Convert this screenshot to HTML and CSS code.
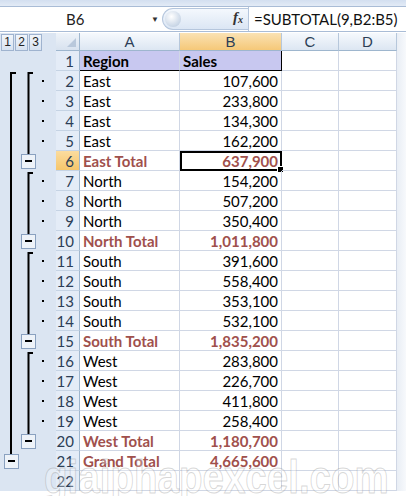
FILE: index.html
```html
<!DOCTYPE html>
<html lang="en">
<head>
    <meta charset="UTF-8">
    <title>Subtotal outline</title>
    <link rel="stylesheet" href="styles.css">
</head>
<body>
    <div class="topstrip"></div>

    <!-- Name box + formula bar -->
    <div class="formula-bar">
        <div class="namebox">
            <span class="cell-ref">B6</span>
            <span class="drop">&#9660;</span>
        </div>
        <div class="pill">
            <span class="knob"></span>
            <span class="fx">f<sub>x</sub></span>
        </div>
        <div class="formula">=SUBTOTAL(9,B2:B5)</div>
    </div>

    <div class="sheet">
        <!-- Outline gutter -->
        <div class="outline">
            <div class="levels">
                <span class="lvl">1</span>
                <span class="lvl">2</span>
                <span class="lvl">3</span>
            </div>
            <svg class="outline-body" width="56" height="440" viewBox="0 0 56 440">
                <g fill="none" stroke="#000" stroke-width="2">
                    <path d="M16 22 H11 V403"/>
                    <path d="M33 22 H28.5 V103"/>
                    <path d="M33 122 H28.5 V183"/>
                    <path d="M33 202 H28.5 V283"/>
                    <path d="M33 302 H28.5 V383"/>
                </g>
                <g fill="#000">
                    <rect x="42" y="29" width="2" height="2"/>
                    <rect x="42" y="49" width="2" height="2"/>
                    <rect x="42" y="69" width="2" height="2"/>
                    <rect x="42" y="89" width="2" height="2"/>
                    <rect x="42" y="129" width="2" height="2"/>
                    <rect x="42" y="149" width="2" height="2"/>
                    <rect x="42" y="169" width="2" height="2"/>
                    <rect x="42" y="209" width="2" height="2"/>
                    <rect x="42" y="229" width="2" height="2"/>
                    <rect x="42" y="249" width="2" height="2"/>
                    <rect x="42" y="269" width="2" height="2"/>
                    <rect x="42" y="309" width="2" height="2"/>
                    <rect x="42" y="329" width="2" height="2"/>
                    <rect x="42" y="349" width="2" height="2"/>
                    <rect x="42" y="369" width="2" height="2"/>
                </g>
                <g class="minus">
                    <rect x="21.5" y="103.5" width="14" height="14"/>
                    <rect x="21.5" y="183.5" width="14" height="14"/>
                    <rect x="21.5" y="283.5" width="14" height="14"/>
                    <rect x="21.5" y="383.5" width="14" height="14"/>
                    <rect x="4.5" y="403.5" width="14" height="14"/>
                </g>
                <g fill="#000">
                    <rect x="25" y="109" width="7" height="2"/>
                    <rect x="25" y="189" width="7" height="2"/>
                    <rect x="25" y="289" width="7" height="2"/>
                    <rect x="25" y="389" width="7" height="2"/>
                    <rect x="8" y="409" width="7" height="2"/>
                </g>
            </svg>
        </div>

        <div class="grid">
            <div class="row head">
                <div class="rh corner"><span class="tri"></span></div>
                <div class="ch col-a">A</div>
                <div class="ch col-b active">B</div>
                <div class="ch col-c">C</div>
                <div class="ch col-d">D</div>
            </div>
            <div class="row">
                <div class="rh">1</div>
                <div class="c col-a title">Region</div>
                <div class="c col-b title last">Sales</div>
                <div class="c col-c"></div>
                <div class="c col-d"></div>
            </div>
            <div class="row"><div class="rh">2</div><div class="c col-a">East</div><div class="c col-b num">107,600</div><div class="c col-c"></div><div class="c col-d"></div></div>
            <div class="row"><div class="rh">3</div><div class="c col-a">East</div><div class="c col-b num">233,800</div><div class="c col-c"></div><div class="c col-d"></div></div>
            <div class="row"><div class="rh">4</div><div class="c col-a">East</div><div class="c col-b num">134,300</div><div class="c col-c"></div><div class="c col-d"></div></div>
            <div class="row"><div class="rh">5</div><div class="c col-a">East</div><div class="c col-b num">162,200</div><div class="c col-c"></div><div class="c col-d"></div></div>
            <div class="row total"><div class="rh active">6</div><div class="c col-a">East Total</div><div class="c col-b num selected">637,900<span class="handle"></span></div><div class="c col-c"></div><div class="c col-d"></div></div>
            <div class="row"><div class="rh">7</div><div class="c col-a">North</div><div class="c col-b num">154,200</div><div class="c col-c"></div><div class="c col-d"></div></div>
            <div class="row"><div class="rh">8</div><div class="c col-a">North</div><div class="c col-b num">507,200</div><div class="c col-c"></div><div class="c col-d"></div></div>
            <div class="row"><div class="rh">9</div><div class="c col-a">North</div><div class="c col-b num">350,400</div><div class="c col-c"></div><div class="c col-d"></div></div>
            <div class="row total"><div class="rh">10</div><div class="c col-a">North Total</div><div class="c col-b num">1,011,800</div><div class="c col-c"></div><div class="c col-d"></div></div>
            <div class="row"><div class="rh">11</div><div class="c col-a">South</div><div class="c col-b num">391,600</div><div class="c col-c"></div><div class="c col-d"></div></div>
            <div class="row"><div class="rh">12</div><div class="c col-a">South</div><div class="c col-b num">558,400</div><div class="c col-c"></div><div class="c col-d"></div></div>
            <div class="row"><div class="rh">13</div><div class="c col-a">South</div><div class="c col-b num">353,100</div><div class="c col-c"></div><div class="c col-d"></div></div>
            <div class="row"><div class="rh">14</div><div class="c col-a">South</div><div class="c col-b num">532,100</div><div class="c col-c"></div><div class="c col-d"></div></div>
            <div class="row total"><div class="rh">15</div><div class="c col-a">South Total</div><div class="c col-b num">1,835,200</div><div class="c col-c"></div><div class="c col-d"></div></div>
            <div class="row"><div class="rh">16</div><div class="c col-a">West</div><div class="c col-b num">283,800</div><div class="c col-c"></div><div class="c col-d"></div></div>
            <div class="row"><div class="rh">17</div><div class="c col-a">West</div><div class="c col-b num">226,700</div><div class="c col-c"></div><div class="c col-d"></div></div>
            <div class="row"><div class="rh">18</div><div class="c col-a">West</div><div class="c col-b num">411,800</div><div class="c col-c"></div><div class="c col-d"></div></div>
            <div class="row"><div class="rh">19</div><div class="c col-a">West</div><div class="c col-b num">258,400</div><div class="c col-c"></div><div class="c col-d"></div></div>
            <div class="row total"><div class="rh">20</div><div class="c col-a">West Total</div><div class="c col-b num">1,180,700</div><div class="c col-c"></div><div class="c col-d"></div></div>
            <div class="row total"><div class="rh">21</div><div class="c col-a">Grand Total</div><div class="c col-b num">4,665,600</div><div class="c col-c"></div><div class="c col-d"></div></div>
            <div class="row"><div class="rh">22</div><div class="c col-a"></div><div class="c col-b"></div><div class="c col-c"></div><div class="c col-d"></div></div>
        </div>
        <div class="edge"></div>
    </div>

    <div class="watermark">giaiphapexcel.com</div>
</body>
</html>
```

FILE: styles.css
```css
body {
    margin: 0;
    width: 406px;
    height: 496px;
    overflow: hidden;
    position: relative;
    background: #fff;
    font-family: Lato, "Open Sans", sans-serif;
    font-size: 15px;
    color: #000;
}
.topstrip {
    height: 7px;
    background: linear-gradient(#d3dff0, #e3ebf6);
    border-bottom: 1px solid #a9bcd6;
    box-sizing: border-box;
}
/* name box + formula */
.formula-bar {
    display: flex;
    align-items: center;
    height: 25px;
    border-bottom: 1px solid #a9bcd6;
    box-sizing: border-box;
    background: #fff;
}
.namebox {
    width: 160px;
    position: relative;
    height: 100%;
    display: flex;
    align-items: center;
}
.cell-ref {
    margin-left: 66px;
    font-size: 15px;
    color: #222;
}
.drop {
    position: absolute;
    left: 151px;
    top: 7px;
    font-size: 8px;
    color: #333;
}
.pill {
    position: relative;
    width: 86px;
    height: 22px;
    margin-left: 2px;
    border-radius: 11px 0 0 11px;
    background: linear-gradient(#f4f8fd, #dbe6f4);
    border: 1px solid #b5c6dd;
    border-right: none;
    box-sizing: border-box;
}
.knob {
    position: absolute;
    left: 2px;
    top: 2px;
    width: 16px;
    height: 16px;
    border-radius: 50%;
    background: radial-gradient(circle at 40% 35%, #fff, #c9d6e6 70%, #a9b9cf);
}
.fx {
    position: absolute;
    right: 5px;
    top: 0;
    font-family: "Liberation Serif", serif;
    font-style: italic;
    font-weight: bold;
    font-size: 15px;
    color: #333;
}
.fx sub {
    font-size: 10px;
    vertical-align: -1px;
}
.formula {
    border-left: 1px solid #b5c6dd;
    height: 100%;
    padding-left: 5px;
    line-height: 24px;
    font-size: 15px;
    color: #111;
}
/* sheet */
.sheet {
    display: flex;
    margin-top: 1px;
}
.outline {
    width: 56px;
    background: #dbe5f2;
    display: flex;
    flex-direction: column;
}
.levels {
    height: 18px;
    display: flex;
    gap: 1px;
    padding: 1px 0 0 1px;
    box-sizing: border-box;
}
.lvl {
    width: 11px;
    height: 15px;
    background: linear-gradient(#f2f6fb, #d7e2f0);
    border: 1px solid #9fb3cf;
    font-family: "Liberation Sans", sans-serif;
    font-size: 12px;
    line-height: 15px;
    text-align: center;
    color: #222;
}
.outline-body .minus rect {
    fill: #eef3f9;
    stroke: #8aa1c0;
    stroke-width: 1;
}
.grid {
    display: flex;
    flex-direction: column;
}
.row {
    display: flex;
    height: 20px;
}
.row.head {
    height: 18px;
}
.rh {
    width: 24px;
    box-sizing: border-box;
    background: #e4ecf7;
    border-right: 1px solid #9eb6ce;
    border-bottom: 1px solid #c5d3e4;
    text-align: right;
    padding-right: 5px;
    line-height: 20px;
    color: #2c3e56;
    font-size: 15px;
}
.rh.active {
    background: linear-gradient(#fbdc9f, #f6c66b);
}
.corner {
    background: linear-gradient(#eef3f9, #d8e2ef);
    border-bottom: 1px solid #9eb6ce;
    position: relative;
}
.tri {
    position: absolute;
    right: 3px;
    bottom: 3px;
    border-left: 9px solid transparent;
    border-bottom: 9px solid #b9c8db;
}
.ch {
    box-sizing: border-box;
    background: linear-gradient(#f6f9fd, #dce6f2);
    border-right: 1px solid #b6c7db;
    border-bottom: 1px solid #9eb6ce;
    text-align: center;
    font-family: "Liberation Sans", sans-serif;
    font-size: 15px;
    line-height: 17px;
    color: #2c3e56;
}
.ch.active {
    background: linear-gradient(#fae2b4, #f5c878);
}
.col-a { width: 100px; }
.col-b { width: 102px; }
.col-c { width: 57px; }
.col-d { width: 58px; }
.c {
    box-sizing: border-box;
    border-right: 1px solid #d0d7e5;
    border-bottom: 1px solid #d0d7e5;
    padding: 0 3px;
    line-height: 20px;
    white-space: nowrap;
    position: relative;
}
.num {
    text-align: right;
}
.title {
    background: #c8c8f0;
    font-weight: bold;
    border-bottom: 1px solid #000;
}
.title.last {
    border-right: 1px solid #000;
}
.total .c {
    font-weight: bold;
    color: #a0504c;
}
.selected {
    outline: 2px solid #000;
    outline-offset: -2px;
}
.handle {
    position: absolute;
    right: -3px;
    bottom: -3px;
    width: 5px;
    height: 5px;
    background: #000;
    border: 1px solid #fff;
    box-sizing: content-box;
}
.edge {
    flex: 1;
    background: linear-gradient(90deg, #e9eef5, #f7f9fc);
}
.watermark {
    position: absolute;
    left: 44px;
    top: 449px;
    font-family: "Liberation Sans", sans-serif;
    font-weight: bold;
    font-size: 47px;
    color: rgba(255, 255, 255, 0.3);
    -webkit-text-stroke: 1px rgba(140, 140, 140, 0.35);
    white-space: nowrap;
    transform: scaleX(0.82);
    transform-origin: left top;
}
```
